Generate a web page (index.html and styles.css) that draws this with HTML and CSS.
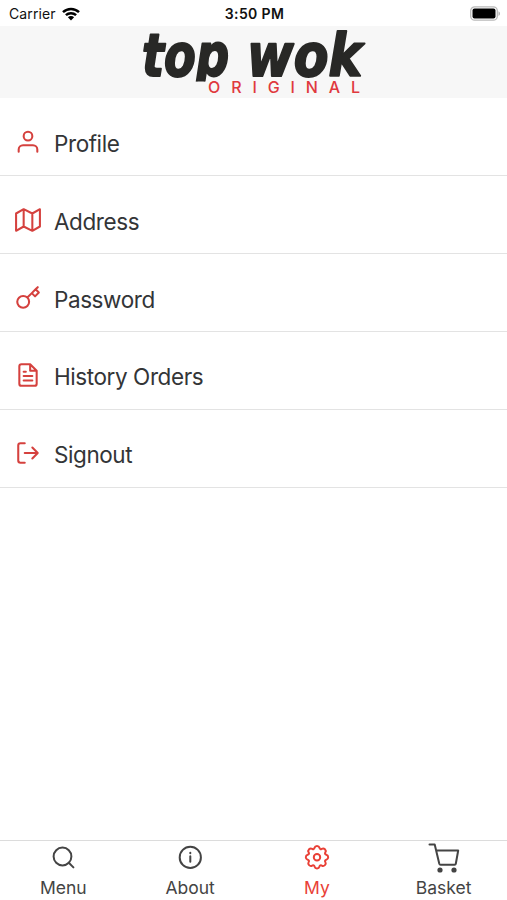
FILE: index.html
```html
<!DOCTYPE html>
<html lang="en">
<head>
<meta charset="utf-8">
<title>Top Wok</title>
<link rel="stylesheet" href="styles.css">
</head>
<body>
<div class="app">
  <div class="status">
    <div class="carrier"><span>Carrier</span>
      <svg class="wifi" viewBox="0 0 18 14"><path d="M1 5.2a11.6 11.6 0 0 1 16 0M3.9 8.2a7.4 7.4 0 0 1 10.2 0" fill="none" stroke="#000" stroke-width="2.5"/><path d="M5.9 10.3a4.4 4.4 0 0 1 6.2 0L9 13.6z"/></svg>
    </div>
    <div class="time">3:50 PM</div>
    <svg class="battery" viewBox="0 0 30 16"><rect x=".7" y=".8" width="26.6" height="13.4" rx="4" fill="#fff" stroke="#b9b9b9" stroke-width="1.3"/><rect x="2.5" y="2.5" width="23" height="10" rx="2"/><path d="M28.5 5.3q1.5 1 1.5 2.4t-1.5 2.4z" fill="#b0b0b0"/></svg>
  </div>
  <header class="header">
    <svg class="logo" viewBox="0 0 230 72">
      <clipPath id="word"><rect width="230" height="55.5"/></clipPath>
      <g clip-path="url(#word)" class="logo-word">
        <text x="3" y="49.8" textLength="87" lengthAdjust="spacingAndGlyphs">top</text>
        <text x="108" y="49.8" textLength="115" lengthAdjust="spacingAndGlyphs">wok</text>
      </g>
      <text class="logo-sub" x="69" y="67" textLength="152">ORIGINAL</text>
    </svg>
  </header>
  <nav class="list">
    <a class="row"><svg class="icon" viewBox="0 0 24 24"><path d="M20.6 21v-2a4 4 0 0 0-4-4H7.4a4 4 0 0 0-4 4v2"/><circle cx="12" cy="6.6" r="4"/></svg><span>Profile</span></a>
    <a class="row"><svg class="icon" viewBox="0 0 24 24"><path d="M1 6v16l7-4 8 4 7-4V2l-7 4-8-4zM8 2v16M16 6v16"/></svg><span>Address</span></a>
    <a class="row"><svg class="icon" viewBox="0 0 24 24"><path d="M21 2l-2 2m-7.61 7.61a5.5 5.5 0 1 1-7.778 7.778 5.5 5.5 0 0 1 7.777-7.777zm0 0L15.5 7.5m0 0l3 3L22 7l-3-3m-3.5 3.5L19 4"/></svg><span>Password</span></a>
    <a class="row"><svg class="icon" viewBox="0 0 24 24"><path d="M14 2H6a2 2 0 0 0-2 2v16a2 2 0 0 0 2 2h12a2 2 0 0 0 2-2V8zM14 2v6h6M16 13H8M16 17H8M10 9H8"/></svg><span>History Orders</span></a>
    <a class="row"><svg class="icon" viewBox="0 0 24 24"><path d="M9 21H5a2 2 0 0 1-2-2V5a2 2 0 0 1 2-2h4M16 17l5-5-5-5M21 12H9"/></svg><span>Signout</span></a>
  </nav>
  <footer class="tabs">
    <a class="tab"><svg class="tab-icon" viewBox="0 0 32 32"><circle cx="15.5" cy="15.5" r="8.9"/><path d="M21.8 21.8l4.6 4.6"/></svg><span>Menu</span></a>
    <a class="tab"><svg class="tab-icon" viewBox="0 0 32 32"><circle cx="16.3" cy="16.4" r="10.6"/><path d="M16.3 15.3v5.4M16.3 11.7v.6"/></svg><span>About</span></a>
    <a class="tab active"><svg class="tab-icon" viewBox="0 0 32 32"><g transform="translate(4.8 5) scale(1.4)" stroke-width="1.4"><path d="M9.796 1.343c-.527-1.79-3.065-1.79-3.592 0l-.094.319a.873.873 0 0 1-1.255.52l-.292-.16c-1.64-.892-3.433.902-2.54 2.541l.159.292a.873.873 0 0 1-.52 1.255l-.319.094c-1.79.527-1.79 3.065 0 3.592l.319.094a.873.873 0 0 1 .52 1.255l-.16.292c-.892 1.64.901 3.434 2.541 2.54l.292-.159a.873.873 0 0 1 1.255.52l.094.319c.527 1.79 3.065 1.79 3.592 0l.094-.319a.873.873 0 0 1 1.255-.52l.292.16c1.64.893 3.434-.902 2.54-2.541l-.159-.292a.873.873 0 0 1 .52-1.255l.319-.094c1.79-.527 1.79-3.065 0-3.592l-.319-.094a.873.873 0 0 1-.52-1.255l.16-.292c.893-1.64-.902-3.433-2.541-2.54l-.292.159a.873.873 0 0 1-1.255-.52z"/><circle cx="8" cy="8" r="2.3"/></g></svg><span>My</span></a>
    <a class="tab"><svg class="tab-icon" viewBox="0 0 32 32"><path d="M1.5 3.5h5.2l4.6 19.2q.3 1 1.3 1h14q1 0 1.2-1l2.4-13.2H8.6"/><circle class="wheel" cx="12" cy="29" r="2.6"/><circle class="wheel" cx="26" cy="29" r="2.6"/></svg><span>Basket</span></a>
  </footer>
</div>
</body>
</html>
```
FILE: styles.css
```css
* { box-sizing: border-box; }
body { margin: 0; background: #fff; font-family: Inter, "Liberation Sans", sans-serif; }
.app { height: 900px; display: flex; flex-direction: column; overflow: hidden; }
.status { height: 26px; display: grid; grid-template-columns: 1fr auto 1fr; align-items: center; padding: 1px 7px 0 9px; color: #111; font-size: 14px; }
.carrier { display: flex; align-items: center; gap: 6px; letter-spacing: .1px; }
.wifi { width: 18px; height: 14px; }
.time { font-weight: 600; letter-spacing: .35px; }
.battery { width: 30px; height: 16px; justify-self: end; }
.header { height: 72px; background: #f7f7f7; display: flex; justify-content: center; }
.logo { width: 230px; height: 72px; }
.logo-word { font: italic bold 58px "DejaVu Sans", sans-serif; fill: #282826; stroke: #282826; stroke-width: 2; stroke-linejoin: round; }
.logo-sub { font: 500 16px Inter, sans-serif; fill: #e0393e; }
.list { flex: 1; padding-top: .7px; }
.row { height: 77.8px; display: flex; align-items: center; gap: 13px; padding: 11px 15px 0; border-bottom: 1px solid #e3e3e3; color: #333537; font-size: 22.5px; letter-spacing: -.42px; }
.row span { padding-top: 2px; }
.icon { width: 26px; height: 26px; margin-bottom: 1px; fill: none; stroke: #d5413e; stroke-width: 1.9; stroke-linecap: round; stroke-linejoin: round; }
.tabs { height: 60px; border-top: 1px solid #dcdcdc; display: grid; grid-template-columns: repeat(4, 1fr); }
.tab { display: flex; flex-direction: column; align-items: center; color: #444; font-size: 17.5px; line-height: 24px; }
.tab-icon { width: 32px; height: 32px; margin-bottom: 2.5px; fill: none; stroke: currentColor; stroke-width: 2; stroke-linecap: round; stroke-linejoin: round; }
.active { color: #e94036; }
.wheel { fill: currentColor; stroke: none; }
```
